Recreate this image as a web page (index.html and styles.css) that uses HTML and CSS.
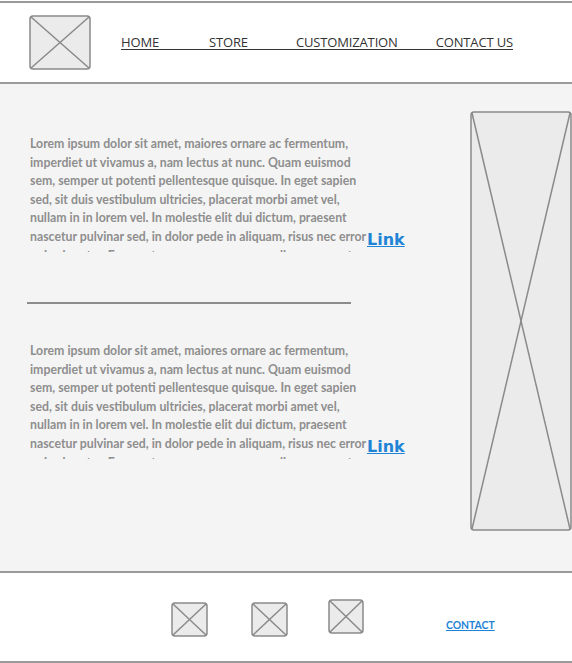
FILE: index.html
```html
<!DOCTYPE html>
<html>
<head>
<meta charset="utf-8">
<link rel="stylesheet" href="styles.css">
</head>
<body>
<div class="page">
  <header class="header">
    <svg class="logo" width="62" height="55" viewBox="0 0 62 55">
      <rect x="1" y="1" width="60" height="53" rx="3" fill="#ebebeb" stroke="#8a8a8a" stroke-width="1.5"/>
      <line x1="2" y1="2" x2="60" y2="53" stroke="#8a8a8a" stroke-width="1.5"/>
      <line x1="60" y1="2" x2="2" y2="53" stroke="#8a8a8a" stroke-width="1.5"/>
    </svg>
    <nav class="nav">
      <a class="nav-item nav-home" href="#">HOME</a>
      <a class="nav-item nav-store" href="#">STORE</a>
      <a class="nav-item nav-custom" href="#">CUSTOMIZATION</a>
      <a class="nav-item" href="#">CONTACT US</a>
    </nav>
  </header>
  <main class="main">
    <div class="content">
      <div class="block">
        <p class="text">Lorem ipsum dolor sit amet, maiores ornare ac fermentum, imperdiet ut vivamus a, nam lectus at nunc. Quam euismod sem, semper ut potenti pellentesque quisque. In eget sapien sed, sit duis vestibulum ultricies, placerat morbi amet vel, nullam in in lorem vel. In molestie elit dui dictum, praesent nascetur pulvinar sed, in dolor pede in aliquam, risus nec error quis pharetra. Eros metus quam, augue nam, ullamcorper et.</p>
        <a class="link" href="#">Link</a>
      </div>
      <hr class="divider">
      <div class="block">
        <p class="text">Lorem ipsum dolor sit amet, maiores ornare ac fermentum, imperdiet ut vivamus a, nam lectus at nunc. Quam euismod sem, semper ut potenti pellentesque quisque. In eget sapien sed, sit duis vestibulum ultricies, placerat morbi amet vel, nullam in in lorem vel. In molestie elit dui dictum, praesent nascetur pulvinar sed, in dolor pede in aliquam, risus nec error quis pharetra. Eros metus quam, augue nam, ullamcorper et.</p>
        <a class="link" href="#">Link</a>
      </div>
    </div>
    <svg class="side-image" width="102" height="420" viewBox="0 0 102 420">
      <rect x="1" y="1" width="100" height="418" rx="3" fill="#ebebeb" stroke="#8a8a8a" stroke-width="1.5"/>
      <line x1="2" y1="2" x2="100" y2="418" stroke="#8a8a8a" stroke-width="1.5"/>
      <line x1="100" y1="2" x2="2" y2="418" stroke="#8a8a8a" stroke-width="1.5"/>
    </svg>
  </main>
  <footer class="footer">
    <svg class="ficon" width="37" height="35" viewBox="0 0 37 35">
      <rect x="1" y="1" width="35" height="33" rx="3" fill="#ebebeb" stroke="#8a8a8a" stroke-width="1.5"/>
      <line x1="2" y1="2" x2="35" y2="33" stroke="#8a8a8a" stroke-width="1.5"/>
      <line x1="35" y1="2" x2="2" y2="33" stroke="#8a8a8a" stroke-width="1.5"/>
    </svg>
    <svg class="ficon ficon-second" width="37" height="35" viewBox="0 0 37 35">
      <rect x="1" y="1" width="35" height="33" rx="3" fill="#ebebeb" stroke="#8a8a8a" stroke-width="1.5"/>
      <line x1="2" y1="2" x2="35" y2="33" stroke="#8a8a8a" stroke-width="1.5"/>
      <line x1="35" y1="2" x2="2" y2="33" stroke="#8a8a8a" stroke-width="1.5"/>
    </svg>
    <svg class="ficon ficon-raised" width="36" height="35" viewBox="0 0 36 35">
      <rect x="1" y="1" width="34" height="33" rx="3" fill="#ebebeb" stroke="#8a8a8a" stroke-width="1.5"/>
      <line x1="2" y1="2" x2="34" y2="33" stroke="#8a8a8a" stroke-width="1.5"/>
      <line x1="34" y1="2" x2="2" y2="33" stroke="#8a8a8a" stroke-width="1.5"/>
    </svg>
    <a class="footer-link" href="#">CONTACT</a>
  </footer>
</div>
</body>
</html>
```

FILE: styles.css
```css
html, body {
  margin: 0;
  padding: 0;
  background: #ffffff;
}

.page {
  padding-top: 1px;
}

.header {
  display: flex;
  align-items: center;
  height: 79px;
  border-top: 2px solid #9a9a9a;
  border-bottom: 2px solid #9a9a9a;
  background: #ffffff;
}

.logo {
  display: block;
  margin-left: 29px;
  flex: none;
}

.nav {
  display: flex;
  margin-left: 30px;
  margin-top: 1px;
  border-bottom: 1px solid #333;
  line-height: 13px;
  height: 13px;
}

.nav-item {
  font-family: "Open Sans", sans-serif;
  font-size: 13px;
  letter-spacing: -0.15px;
  color: #333;
  text-decoration: none;
}

.nav-home {
  margin-right: 50px;
}

.nav-store {
  margin-right: 48px;
}

.nav-custom {
  margin-right: 38px;
}

.main {
  display: flex;
  justify-content: space-between;
  align-items: flex-start;
  height: 487px;
  background: #f4f4f4;
  border-bottom: 2px solid #9a9a9a;
}

.content {
  padding-left: 27px;
  padding-top: 51px;
  width: 400px;
}

.block {
  display: flex;
  align-items: flex-end;
  padding-left: 3px;
}

.text {
  margin: 0;
  width: 337px;
  height: 117px;
  overflow: hidden;
  font-family: "Lato", sans-serif;
  font-weight: 700;
  font-size: 12.3px;
  line-height: 18.6px;
  color: #8e8e8e;
}

.link {
  font-family: "DejaVu Sans", sans-serif;
  font-weight: 700;
  font-size: 16px;
  color: #1f84d6;
  text-decoration: underline;
  margin-bottom: 3px;
}

.divider {
  width: 324px;
  height: 2px;
  margin: 50px 0 38px 0;
  border: none;
  background: #8c8c8c;
}

.side-image {
  display: block;
  margin-top: 27px;
  flex: none;
}

.footer {
  display: flex;
  align-items: flex-start;
  height: 88px;
  padding-left: 171px;
  background: #ffffff;
  border-bottom: 2px solid #9a9a9a;
}

.ficon {
  display: block;
  margin-top: 29px;
  margin-right: 43px;
  flex: none;
}

.ficon-second {
  margin-right: 40px;
}

.ficon-raised {
  margin-top: 26px;
  margin-right: 82px;
}

.footer-link {
  margin-top: 46px;
  font-family: "Lato", sans-serif;
  font-weight: 700;
  font-size: 10.4px;
  color: #1f84d6;
  text-decoration: underline;
}
```
